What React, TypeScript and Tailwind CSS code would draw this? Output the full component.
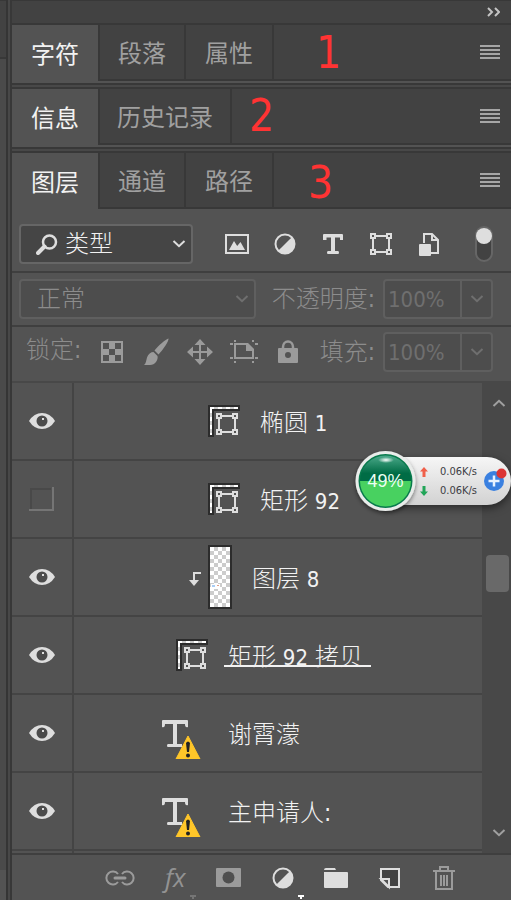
import React from "react";

type Tab = { label: string; width: string };

const LATIN_CJK = "font-['DejaVu_Sans_Condensed','Noto_Sans_CJK_SC',sans-serif]";

function MenuIcon() {
  return (
    <svg width="20" height="14" viewBox="0 0 20 14" fill="#a6a6a6">
      {[0, 4, 8, 12].map((y) => (
        <rect key={y} y={y} width="20" height="2" />
      ))}
    </svg>
  );
}

function Chevron({ up = false }: { up?: boolean }) {
  return (
    <svg width="14" height="8" viewBox="0 0 14 8" fill="none" stroke="currentColor" strokeWidth="2">
      <path d={up ? "M1.5 7 7 1.8 12.5 7" : "M1.5 1 7 6.2 12.5 1"} />
    </svg>
  );
}

function TabBar({ tabs, mark, markPlace }: { tabs: Tab[]; mark: string; markPlace: string }) {
  return (
    <div className="relative flex h-14" role="tablist">
      {tabs.map((tab, i) => (
        <button
          key={tab.label}
          type="button"
          role="tab"
          aria-selected={i === 0}
          className={`${tab.width} shrink-0 pt-[3px] text-2xl leading-none ${
            i === 0 ? "bg-[#535353] text-[#f2f2f2]" : "border-b-2 border-l-2 border-[#383838] text-[#a0a0a0]"
          }`}
        >
          {tab.label}
        </button>
      ))}
      <div className="flex flex-1 items-center justify-end border-b-2 border-l-2 border-[#383838] pr-[11px]">
        <button type="button" aria-label="面板菜单">
          <MenuIcon />
        </button>
      </div>
      <span className={`absolute ${markPlace} text-[44px] leading-none text-[#ff3333]`}>{mark}</span>
    </div>
  );
}

function GroupGap() {
  return (
    <div className="border-t-2 border-[#535353]" aria-hidden="true">
      <div className="h-[6px] border-y-2 border-[#383838] bg-[#484848]" />
    </div>
  );
}

function HalfCircle() {
  return (
    <>
      <circle cx="11" cy="11" r="9.5" fill="none" stroke="#dedede" strokeWidth="2" />
      <path d="M17.8 4.2A9.6 9.6 0 0 1 4.2 17.8Z" fill="#dedede" />
    </>
  );
}

function FrameShape() {
  return (
    <>
      <path d="M6 3H16M6 19H16M3 6V16M19 6V16" stroke="#dedede" strokeWidth="2" />
      <path d="M1 1H5V5H1ZM17 1H21V5H17ZM1 17H5V21H1ZM17 17H21V21H17Z" stroke="#dedede" strokeWidth="2" fill="#535353" />
    </>
  );
}

type Icon = { name: string; art: React.ReactNode; w: number; h: number };

const filterIcons: Icon[] = [
  {
    name: "像素图层",
    w: 24,
    h: 20,
    art: (
      <>
        <rect x="1" y="1" width="22" height="18" fill="none" stroke="#dedede" strokeWidth="2" />
        <path d="M4 16 9 7 12.2 12 15.5 8 20 16Z" fill="#dedede" />
      </>
    ),
  },
  { name: "调整图层", w: 22, h: 22, art: <HalfCircle /> },
  {
    name: "文字图层",
    w: 20,
    h: 22,
    art: (
      <path
        d="M1 1H19Q20 1 20 2V7H17V4.5H12V18H15Q16 18 16 19.5T15 21H5Q4 21 4 19.5T5 18H8V4.5H3.5V7H0V2Q0 1 1 1Z"
        fill="#dedede"
      />
    ),
  },
  { name: "形状图层", w: 22, h: 22, art: <FrameShape /> },
  {
    name: "智能对象",
    w: 20,
    h: 24,
    art: (
      <>
        <path d="M5 11V2H13L19 8V21H12" fill="none" stroke="#dedede" strokeWidth="2" />
        <path d="M13 2V8H19" fill="none" stroke="#dedede" strokeWidth="2" />
        <rect y="12" width="12" height="12" rx="1" fill="#dedede" />
      </>
    ),
  },
];

const lockIcons: Icon[] = [
  {
    name: "锁定透明像素",
    w: 22,
    h: 22,
    art: (
      <path
        fillRule="evenodd"
        d="M0 0H22V22H0ZM2 2V8H8V2ZM14 2V8H20V2ZM8 8V14H14V8ZM2 14V20H8V14ZM14 14V20H20V14Z"
      />
    ),
  },
  {
    name: "锁定图像像素",
    w: 26,
    h: 28,
    art: (
      <path d="M25.5 0.5C26 3 20 12 15.5 16.5L11.500 12.5C15 8 23 1 25.5 0.5ZM10.5 14 14.5 18C15.5 22 12 27 7 27H1C3 25.5 3 23 4 19.5C5 16 8 14 10.5 14Z" />
    ),
  },
  {
    name: "锁定位置",
    w: 26,
    h: 26,
    art: (
      <path d="M13 0 18.5 6H14V12H20V7.5L26 13 20 18.5V14H14V20H18.5L13 26 7.5 20H12V14H6V18.5L0 13 6 7.5V12H12V6H7.5Z" />
    ),
  },
  {
    name: "锁定画板",
    w: 28,
    h: 24,
    art: (
      <>
        <path d="M4 0H6V2H4ZM22 0H24V2H22ZM0 3H3V5H0ZM25 3H28V5H25ZM0 17H3V19H0ZM25 17H28V19H25ZM4 21H6V23H4ZM22 21H24V23H22Z" />
        <path d="M5 4H17L23 10V18H5Z" fill="none" stroke="#9b9b9b" strokeWidth="2" />
        <path d="M16 3V11H24V9L18 3Z" />
      </>
    ),
  },
  {
    name: "锁定全部",
    w: 20,
    h: 24,
    art: (
      <>
        <path d="M5 9V7a5 5.5 0 0 1 10 0V9" fill="none" stroke="#9b9b9b" strokeWidth="2.5" />
        <path
          fillRule="evenodd"
          d="M1 8H19Q20 8 20 9V22Q20 23 19 23H1Q0 23 0 22V9Q0 8 1 8ZM10 12A3 3 0 1 0 10 18 3 3 0 1 0 10 12Z"
        />
      </>
    ),
  },
];

function PercentBox({ id, label }: { id: string; label: string }) {
  return (
    <>
      <label htmlFor={id} className="text-2xl leading-none font-light text-[#8c8c8c]">
        {label}
      </label>
      <div className="ml-2 flex h-10 w-[110px] shrink-0 rounded border-2 border-[#5f5f5f] bg-[#4d4d4d] text-[#6f6f6f]">
        <input
          id={id}
          defaultValue="100%"
          disabled
          className="w-[77px] border-r-2 border-[#5f5f5f] pl-[3px] text-[22px] leading-none"
        />
        <button type="button" disabled aria-label={`${label}滑块`} className="flex flex-1 items-center justify-center">
          <Chevron />
        </button>
      </div>
    </>
  );
}

function Eye() {
  return (
    <svg width="26" height="16" viewBox="0 0 26 16">
      <path d="M0 8Q5 0 13 0T26 8Q21 16 13 16T0 8Z" fill="#dedede" />
      <circle cx="13" cy="8" r="5.5" fill="#4b4b4b" />
      <rect x="13" y="5" width="2" height="2" fill="#dedede" />
    </svg>
  );
}

function HiddenBox() {
  return (
    <svg width="26" height="26" viewBox="0 0 26 26" fill="none" strokeWidth="2">
      <path d="M2 23V3H22" stroke="#494949" />
      <path d="M24 1V24H0" stroke="#757575" />
    </svg>
  );
}

function ShapeThumb() {
  return (
    <svg width="32" height="32" viewBox="0 0 32 32">
      <path d="M0 0H32V6H6V32H0Z" fill="#2c2c2c" />
      <path d="M2 3H30M3 2V30" stroke="#cccccc" strokeWidth="2" />
      <path d="M2 3H30M3 4V30" stroke="#ffffff" strokeWidth="2" strokeDasharray="4 4" />
      <g transform="translate(8 8)">
        <FrameShape />
      </g>
    </svg>
  );
}

function ClippedThumb() {
  return (
    <svg width="43" height="64" viewBox="0 0 43 64">
      <defs>
        <pattern id="checks" x="21" y="2" width="8" height="8" patternUnits="userSpaceOnUse">
          <rect width="8" height="8" fill="#fff" />
          <path d="M4 0H8V4H4ZM0 4H4V8H0Z" fill="#ccc" />
        </pattern>
      </defs>
      <path d="M12 28H5V36" fill="none" stroke="#dedede" strokeWidth="2" />
      <path d="M0 35H10L5 41Z" fill="#dedede" />
      <rect x="20" y="1" width="22" height="62" fill="url(#checks)" stroke="#2c2c2c" strokeWidth="2" />
      <rect x="22" y="39" width="9" height="5" fill="#fff" />
      <rect x="23" y="40" width="3" height="2" fill="#a9cdf5" />
      <rect x="28" y="40" width="2" height="1" fill="#e0a08a" />
    </svg>
  );
}

function TypeThumb() {
  return (
    <svg width="46" height="52" viewBox="0 0 46 52">
      <path
        d="M1 13H25Q26 13 26 14V20Q23 21 23 17H15V37H20V40H6Q5 40 5 38.5T6 37H11V17H3Q3 21 0 20V14Q0 13 1 13Z"
        fill="#dedede"
      />
      <path d="M26 29 38 52H14Z" fill="#ffc629" stroke="#ffc629" strokeLinejoin="round" />
      <path d="M24 36Q26 33 28 36L27 45H25Z" fill="#222" />
      <circle cx="26" cy="48.5" r="2" fill="#222" />
    </svg>
  );
}

type Layer = { name: string; visible: boolean; indent: string; thumb: React.ReactNode; underlined?: boolean };

const layers: Layer[] = [
  { name: "椭圆 1", visible: true, indent: "pl-[134px]", thumb: <ShapeThumb /> },
  { name: "矩形 92", visible: false, indent: "pl-[134px]", thumb: <ShapeThumb /> },
  { name: "图层 8", visible: true, indent: "pl-[115px]", thumb: <ClippedThumb /> },
  { name: "矩形 92 拷贝", visible: true, indent: "pl-[102px]", thumb: <ShapeThumb />, underlined: true },
  { name: "谢霄濛", visible: true, indent: "pl-[88px]", thumb: <TypeThumb /> },
  { name: "主申请人:", visible: true, indent: "pl-[88px]", thumb: <TypeThumb /> },
];

function LayerRow({ layer }: { layer: Layer }) {
  return (
    <li className="flex h-[78px] shrink-0 border-b-2 border-[#444444]">
      <button
        type="button"
        aria-label="切换可见性"
        aria-pressed={layer.visible}
        className="flex w-[62px] shrink-0 items-center justify-center border-r-2 border-[#444444]"
      >
        {layer.visible ? <Eye /> : <HiddenBox />}
      </button>
      <div className={`flex flex-1 items-center ${layer.indent}`}>
        {layer.thumb}
        <span
          className={`ml-4 h-6 px-1 text-2xl leading-7 font-light whitespace-nowrap text-[#f2f2f2] ${
            layer.underlined ? "border-b-2 border-[#f2f2f2] pr-2" : ""
          }`}
        >
          {layer.name.split(/(\d+)/).map((part, i) => (
            <span key={i} className={i % 2 ? "text-[22px] leading-7 font-normal" : ""}>
              {part}
            </span>
          ))}
        </span>
      </div>
    </li>
  );
}

function SpeedWidget() {
  return (
    <div className="absolute top-[74px] right-0 flex w-[156px] items-center">
      <div className="ml-8 flex h-12 flex-1 items-center rounded-r-full bg-linear-to-b from-[#f6f6f6] to-[#d2d2d2] pl-[33px] text-[11px] leading-none text-[#3c3c44] shadow-[0_3px_8px_rgba(0,0,0,0.5)]">
        <div className="flex flex-col gap-2">
          <div className="flex items-center gap-3">
            <svg width="8" height="10" viewBox="0 0 8 10" fill="#f0604a">
              <path d="M4 0 8 4.5H5.5V10H2.5V4.5H0Z" />
            </svg>
            <span>0.06K/s</span>
          </div>
          <div className="flex items-center gap-3">
            <svg width="8" height="10" viewBox="0 0 8 10" fill="#21a558">
              <path d="M4 10 8 5.5H5.5V0H2.5V5.5H0Z" />
            </svg>
            <span>0.06K/s</span>
          </div>
        </div>
        <button type="button" aria-label="加速" className="ml-[5px] shrink-0">
          <svg width="26" height="26" viewBox="0 0 26 26">
            <circle cx="12" cy="13" r="10" fill="#3a80e0" />
            <path d="M12 7.5V18.5M6.5 13H17.5" stroke="#e8f2ff" strokeWidth="2.5" />
            <circle cx="19.5" cy="5.5" r="5" fill="#dc3535" />
          </svg>
        </button>
      </div>
      <div className="absolute left-0 flex size-[61px] items-center justify-center">
        <svg className="absolute inset-0 overflow-visible" width="61" height="61" viewBox="0 0 61 61">
          <defs>
            <linearGradient id="ball" x1="0" y1="0" x2="0" y2="1">
              <stop offset="0" stopColor="#4ba98a" />
              <stop offset="0.7" stopColor="#006c45" />
            </linearGradient>
            <radialGradient id="glow">
              <stop offset="0" stopColor="#fff" />
              <stop offset="1" stopColor="#fff" stopOpacity="0" />
            </radialGradient>
            <filter id="drop" x="-20%" y="-20%" width="140%" height="140%">
              <feDropShadow dx="0" dy="2" stdDeviation="2" floodOpacity="0.5" />
            </filter>
          </defs>
          <circle cx="30.5" cy="30" r="30" fill="#e9ecea" filter="url(#drop)" />
          <circle cx="30.5" cy="30" r="27" fill="#087a4c" />
          <path d="M5 30A25.5 25.5 0 0 1 56 30Z" fill="url(#ball)" />
          <path d="M5 30A25.5 25.5 0 0 0 56 30Z" fill="#48d160" />
          <ellipse cx="31" cy="9" rx="8" ry="3" fill="url(#glow)" />
        </svg>
        <span className="relative font-['Liberation_Sans',sans-serif] text-[18px] leading-none text-[#eafff2]">49%</span>
      </div>
    </div>
  );
}

const footerTools: { name: string; art: React.ReactNode }[] = [
  {
    name: "链接图层",
    art: (
      <g fill="none" stroke="#9b9b9b" strokeWidth="2">
        <path d="M25 19A6.5 6.5 0 1 0 25 27M29 19A6.5 6.5 0 1 1 29 27" />
        <path d="M22 23H32" strokeWidth="3" strokeLinecap="round" />
      </g>
    ),
  },
  {
    name: "图层样式",
    art: (
      <>
        <text x="18" y="32" fontSize="26" fontStyle="italic" fontFamily="Open Sans, sans-serif" fontWeight="400" fill="#929292">
          fx
        </text>
        <path d="M43 40H49V42H47V44H45V42H43Z" fill="#757575" />
      </>
    ),
  },
  {
    name: "添加蒙版",
    art: (
      <>
        <rect x="15" y="13" width="25" height="19" rx="1" fill="#9b9b9b" />
        <circle cx="27.5" cy="22.5" r="6" fill="#4f4f4f" />
      </>
    ),
  },
  {
    name: "新建调整图层",
    art: (
      <>
        <g transform="translate(17 12)">
          <HalfCircle />
        </g>
        <path d="M43 40H49V42H47V44H45V42H43Z" fill="#fff" />
      </>
    ),
  },
  {
    name: "新建组",
    art: <path d="M15 15Q15 13 17 13H26L27 15ZM15 17H38Q39 17 39 18V32Q39 33 38 33H16Q15 33 15 32Z" fill="#dedede" />,
  },
  {
    name: "新建图层",
    art: (
      <>
        <path d="M18 14H36V32H25L18 25Z" fill="#424242" stroke="#dedede" strokeWidth="2" />
        <path d="M18 24H26V32Z" fill="#535353" stroke="#dedede" strokeWidth="2" />
      </>
    ),
  },
  {
    name: "删除图层",
    art: (
      <g fill="none" stroke="#9b9b9b" strokeWidth="2">
        <path d="M16 16H38M19 17V34H35V17M23 15V12H31V15" />
        <path d="M24 20V31M27 20V31M30 20V31" />
      </g>
    ),
  },
];

export default function App() {
  return (
    <div className={`flex h-screen overflow-hidden bg-[#535353] ${LATIN_CJK}`}>
      <div className="flex w-3 shrink-0 border-r-2 border-[#383838] bg-[#484848]" aria-hidden="true">
        <div className="flex w-2 flex-col border-r-2 border-[#353535]">
          <div className="h-[59px] border-t border-b-2 border-[#383838] bg-[#424242]" />
          <div className="flex-1 bg-[#4a4a4a]" />
          <div className="h-[30px] bg-[#535353]" />
        </div>
      </div>

      <main className="flex min-w-0 flex-1 flex-col">
        <div className="bg-[#424242]">
          <div className="flex h-[25px] items-center justify-end border-t border-b-2 border-[#383838] pr-[11px]">
            <button type="button" aria-label="折叠面板">
              <svg width="13" height="10" viewBox="0 0 13 10" fill="none" stroke="#c4c4c4" strokeWidth="2">
                <path d="M1 1 5 5 1 9M8 1 12 5 8 9" />
              </svg>
            </button>
          </div>
          <TabBar
            mark="1"
            markPlace="top-[6px] left-[304px]"
            tabs={[
              { label: "字符", width: "w-[86px]" },
              { label: "段落", width: "w-[86px]" },
              { label: "属性", width: "w-[88px]" },
            ]}
          />
          <GroupGap />
          <TabBar
            mark="2"
            markPlace="top-[5px] left-[237px]"
            tabs={[
              { label: "信息", width: "w-[86px]" },
              { label: "历史记录", width: "w-[132px]" },
            ]}
          />
          <GroupGap />
          <TabBar
            mark="3"
            markPlace="top-[8px] left-[296px]"
            tabs={[
              { label: "图层", width: "w-[86px]" },
              { label: "通道", width: "w-[86px]" },
              { label: "路径", width: "w-[88px]" },
            ]}
          />
        </div>

        <div className="flex h-16 shrink-0 items-center border-b-2 border-[#3f3f3f] pr-[18px] pb-px pl-[7px]">
          <div className="relative mt-2 mr-5 w-[174px] shrink-0 text-[#dedede]">
            <select
              aria-label="图层过滤类型"
              className="h-10 w-full appearance-none rounded border-2 border-[#666666] bg-[#454545] pl-11 text-2xl leading-none font-light text-[#f2f2f2]"
            >
              <option>类型</option>
            </select>
            <svg
              className="pointer-events-none absolute top-[10px] left-[17px]"
              width="22"
              height="21"
              viewBox="0 0 22 21"
              fill="none"
              stroke="currentColor"
            >
              <circle cx="13.5" cy="8" r="6.5" strokeWidth="2.5" />
              <path d="M8.5 12.5 2 19" strokeWidth="4" strokeLinecap="round" />
            </svg>
            <span className="pointer-events-none absolute top-4 right-[7px]">
              <Chevron />
            </span>
          </div>
          {filterIcons.map((icon) => (
            <button
              key={icon.name}
              type="button"
              aria-label={icon.name}
              className="mt-2 flex h-8 w-12 shrink-0 items-center justify-center"
            >
              <svg width={icon.w} height={icon.h} viewBox={`0 0 ${icon.w} ${icon.h}`} fill="none">
                {icon.art}
              </svg>
            </button>
          ))}
          <button
            type="button"
            aria-label="打开或关闭过滤"
            className="mt-2 ml-auto h-9 w-[18px] rounded-full border-2 border-[#666666] bg-[#424242]"
          >
            <span className="-mt-4 -ml-px block size-4 rounded-full bg-[#dedede]" />
          </button>
        </div>

        <div className="flex h-[54px] shrink-0 items-center border-b-2 border-[#3f3f3f] pr-[18px] pl-[7px]">
          <div className="relative mr-4 min-w-0 flex-1 text-[#6f6f6f]">
            <select
              aria-label="混合模式"
              disabled
              className="h-10 w-full appearance-none rounded border-2 border-[#5f5f5f] bg-[#4d4d4d] pl-4 text-2xl leading-none font-light text-[#8c8c8c] opacity-100"
            >
              <option>正常</option>
            </select>
            <span className="pointer-events-none absolute top-4 right-[7px]">
              <Chevron />
            </span>
          </div>
          <PercentBox id="opacity" label="不透明度:" />
        </div>

        <div className="flex h-14 shrink-0 items-center border-b-2 border-[#484848] pr-[18px] pb-1 pl-[14px]">
          <span className="w-16 shrink-0 pb-1 text-2xl leading-none font-light text-[#8c8c8c]">锁定:</span>
          {lockIcons.map((icon) => (
            <button
              key={icon.name}
              type="button"
              aria-label={icon.name}
              className="flex h-10 w-11 shrink-0 items-center justify-center"
            >
              <svg width={icon.w} height={icon.h} viewBox={`0 0 ${icon.w} ${icon.h}`} fill="#9b9b9b">
                {icon.art}
              </svg>
            </button>
          ))}
          <div className="ml-auto flex items-center">
            <PercentBox id="fill" label="填充:" />
          </div>
        </div>

        <div className="relative flex min-h-0 flex-1">
          <ul className="flex min-w-0 flex-1 flex-col overflow-hidden">
            {layers.map((layer) => (
              <LayerRow key={layer.name} layer={layer} />
            ))}
            <li className="w-[62px] flex-1 border-r-2 border-[#444444]" aria-hidden="true" />
          </ul>
          <div className="flex w-[29px] shrink-0 flex-col bg-[#484848] text-[#a0a0a0]">
            <button type="button" aria-label="向上滚动" className="flex h-10 items-center justify-center pl-[5px]">
              <Chevron up />
            </button>
            <div className="flex-1 pl-1">
              <div className="mt-[132px] h-[37px] w-[23px] rounded-sm bg-[#696969]" />
            </div>
            <button type="button" aria-label="向下滚动" className="flex h-10 items-center justify-center pl-[5px]">
              <Chevron />
            </button>
          </div>
          <SpeedWidget />
        </div>

        <footer className="flex h-[47px] shrink-0 border-t-2 border-[#3f3f3f] pl-[81px]">
          {footerTools.map((tool) => (
            <button key={tool.name} type="button" aria-label={tool.name} className="w-[54px] shrink-0">
              <svg width="54" height="45" viewBox="0 0 54 45">
                {tool.art}
              </svg>
            </button>
          ))}
        </footer>
      </main>
    </div>
  );
}
